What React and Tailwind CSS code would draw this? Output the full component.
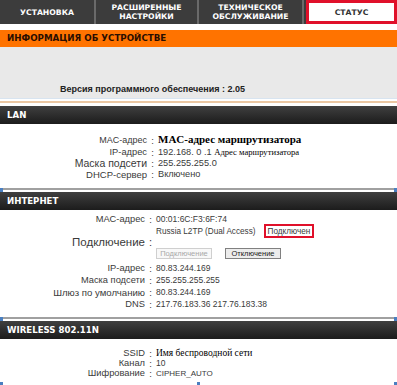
import React from "react";

const tabs = [
  { label: ["УСТАНОВКА"], w: "w-[96px]" },
  { label: ["РАСШИРЕННЫЕ", "НАСТРОЙКИ"], w: "w-[103px]" },
  { label: ["ТЕХНИЧЕСКОЕ", "ОБСЛУЖИВАНИЕ"], w: "w-[105px]" },
];

// label : value row, label right aligned against the colon
const Row = ({ label, children, className = "", labelClass = "text-[9.3px]", lw = "w-[145px]" }) => (
  <div className={"flex items-center " + className}>
    <div className={lw + " shrink-0 text-right whitespace-nowrap " + labelClass}>{label}</div>
    <div className="w-[11px] shrink-0 text-center text-[9.5px]">:</div>
    <div className="flex-1 whitespace-nowrap text-[8.5px]">{children}</div>
  </div>
);

const Header = ({ children }) => (
  <div className="h-[18px] flex items-center px-[7px] bg-gradient-to-b from-[#404040] to-[#1c1c1c] text-white font-bold text-[8.6px] font-['DejaVu_Sans',sans-serif]">
    {children}
  </div>
);

const Divider = () => (
  <div className="relative h-[5px] bg-white">
    <div className="absolute left-0 right-0 top-[1px] h-[2px] bg-[#a0a0a0]" />
    <div className="absolute left-0 top-[1px] w-[3px] h-[4px] bg-[#4a7fc0]" />
    <div className="absolute right-0 top-[1px] w-[3px] h-[4px] bg-[#4a7fc0]" />
  </div>
);

export default function App() {
  return (
    <div className="w-[397px] h-[385px] overflow-hidden bg-white text-[#3a3a3a] leading-[11px] font-['Liberation_Sans',Arial,sans-serif]">
      {/* tabs */}
      <div className="flex h-[24px] bg-[#3c3c3c]">
        {tabs.map((t, i) => (
          <div
            key={i}
            className={
              t.w +
              " flex flex-col items-center justify-center border-r-[2px] border-[#6a6a6a] text-white font-bold text-[7.7px] leading-[9px] font-['DejaVu_Sans',sans-serif]"
            }
          >
            {t.label.map((l) => (
              <span key={l}>{l}</span>
            ))}
          </div>
        ))}
        <div className="flex-1 flex items-center justify-center bg-white border-[3px] border-[#e0102a] ml-[2px] text-[#333] font-bold text-[7.7px] font-['DejaVu_Sans',sans-serif]">
          СТАТУС
        </div>
      </div>
      <div className="h-[6px] bg-white" />

      {/* device info */}
      <div className="h-[17px] flex items-center px-[7px] bg-[#ff7300] text-[#2a0e00] font-bold text-[8.7px] font-['DejaVu_Sans',sans-serif]">
        ИНФОРМАЦИЯ ОБ УСТРОЙСТВЕ
      </div>
      <div className="h-[51px] bg-[#e9e9e9] flex items-end pb-[3px] pl-[60px]">
        <span className="font-bold text-[9px] text-[#222]">
          Версия программного обеспечения : 2.05
        </span>
      </div>
      <div className="h-[1px] bg-[#d8e4f0]" />
      <div className="h-[2px] bg-white" />
      <div className="h-[2px] bg-[#ebc7a3]" />
      <div className="h-[3px] bg-white" />

      {/* LAN */}
      <Header>LAN</Header>
      <div className="pt-[9px] pb-[7px]">
        <Row label="MAC-адрес" className="h-[14px]" labelClass="text-[9px]" lw="w-[147px]">
          <span className="font-['Liberation_Serif',serif] font-bold text-[11px] text-black">
            MAC-адрес маршрутизатора
          </span>
        </Row>
        <Row label="IP-адрес" className="h-[11px]" labelClass="text-[9.3px]" lw="w-[147px]">
          <span className="text-[9.2px]">192.168. 0 .1 </span>
          <span className="font-['Liberation_Serif',serif] text-[8.6px] text-black">Адрес маршрутизатора</span>
        </Row>
        <Row label="Маска подсети" className="h-[11px]" labelClass="text-[10.5px]" lw="w-[147px]">
          <span className="text-[9.2px]">255.255.255.0</span>
        </Row>
        <Row label="DHCP-сервер" className="h-[11px]" labelClass="text-[9.5px]" lw="w-[147px]">
          <span className="text-[9.2px]">Включено</span>
        </Row>
      </div>
      <Divider />

      {/* Internet */}
      <Header>ИНТЕРНЕТ</Header>
      <div className="pt-[3px] pb-[6px]">
        <Row label="MAC-адрес" className="h-[12px]">00:01:6C:F3:6F:74</Row>
        <div className="flex">
          <div className="w-[145px] shrink-0 text-right text-[11.5px] leading-[12px] pt-[11px] whitespace-nowrap">Подключение</div>
          <div className="w-[11px] shrink-0 text-center text-[11px] leading-[12px] pt-[11px]">:</div>
          <div className="flex flex-col">
            <div className="flex items-center h-[12px]">
              <span className="whitespace-nowrap text-[8.2px]">Russia L2TP (Dual Access)</span>
              <span className="ml-[8px] border-2 border-[#e0102a] px-[2px] h-[14px] flex items-center whitespace-nowrap text-[8.2px]">
                Подключен
              </span>
            </div>
            <div className="flex items-end gap-[13px] h-[25px] pb-[3px]">
              <span className="w-[56px] h-[11px] flex items-center justify-center border border-[#cfcfcf] bg-[#f8f8f8] text-[#a8a8a8] text-[7.5px]">
                Подключение
              </span>
              <span className="w-[56px] h-[11px] flex items-center justify-center border border-[#808080] bg-[#ececec] text-[#222] text-[7.5px]">
                Отключение
              </span>
            </div>
          </div>
        </div>
        <Row label="IP-адрес" className="h-[12px]">80.83.244.169</Row>
        <Row label="Маска подсети" className="h-[12px]">255.255.255.255</Row>
        <Row label="Шлюз по умолчанию" className="h-[12px]" labelClass="text-[9.6px]">80.83.244.169</Row>
        <Row label="DNS" className="h-[12px]">217.76.183.36 217.76.183.38</Row>
      </div>
      <Divider />

      {/* Wireless */}
      <Header>WIRELESS 802.11N</Header>
      <div className="pt-[9px]">
        <Row label="SSID" className="h-[10px]">
          <span className="font-['Liberation_Serif',serif] text-[9.5px] text-black">Имя беспроводной сети</span>
        </Row>
        <Row label="Канал" className="h-[10px]">10</Row>
        <Row label="Шифрование" className="h-[10px]">
          <span className="text-[8px]">CIPHER_AUTO</span>
        </Row>
      </div>
      <div className="mt-[4px] flex justify-between">
        <div className="w-[3px] h-[4px] bg-[#4a7fc0]" />
        <div className="w-[3px] h-[4px] bg-[#4a7fc0]" />
        <div className="w-[3px] h-[4px] bg-[#4a7fc0]" />
      </div>
    </div>
  );
}
